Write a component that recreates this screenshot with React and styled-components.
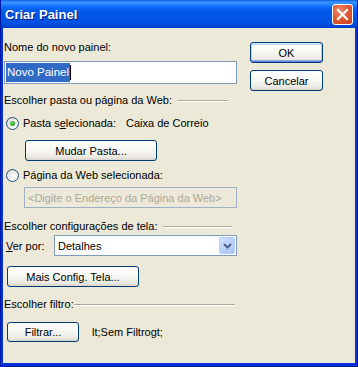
import React from 'react';
import styled, { createGlobalStyle, css } from 'styled-components';

const Global = createGlobalStyle`
  html, body { margin: 0; padding: 0; background: #0831D9; }
  body { font-family: Tahoma, "Liberation Sans", Arial, sans-serif; font-size: 11px; color: #000; }
`;

const CriarPainel = () => {
    return (
        <Window>
            <Global />
            <TitleBar>
                <Title>Criar Painel</Title>
                <CloseButton>
                    <svg width="13" height="13" viewBox="0 0 13 13">
                        <path d="M2 2 L11 11 M11 2 L2 11" stroke="#fff" strokeWidth="2.2" strokeLinecap="square" />
                    </svg>
                </CloseButton>
            </TitleBar>
            <Body>
                <LeftColumn>
                    <Label style={{ marginTop: 13 }}>Nome do novo painel:</Label>
                    <TextBox>
                        <Selected>Novo Painel</Selected>
                        <Caret />
                    </TextBox>

                    <Header top={10}>
                        <span>Escolher pasta ou página da Web:</span>
                        <Line gap={5} right={9} />
                    </Header>
                    <RadioRow top={10}>
                        <Radio checked />
                        <span>Pasta s<u>e</u>lecionada:</span>
                        <Value>Caixa de Correio</Value>
                    </RadioRow>
                    <Button top={10} left={21} width={132}>Mudar Pasta...</Button>
                    <RadioRow top={8}>
                        <Radio />
                        <span>Página da Web selecionada:</span>
                    </RadioRow>
                    <DisabledBox>&lt;Digite o Endereço da Página da Web&gt;</DisabledBox>

                    <Header top={12}>
                        <span>Escolher configurações de tela:</span>
                        <Line gap={6} right={5} />
                    </Header>
                    <SelectRow>
                        <span><u>V</u>er por:</span>
                        <Select>
                            <span>Detalhes</span>
                            <ArrowButton>
                                <svg width="9" height="6" viewBox="0 0 9 6">
                                    <path d="M1 1 L4.5 4.5 L8 1" fill="none" stroke="#4D6185" strokeWidth="2" />
                                </svg>
                            </ArrowButton>
                        </Select>
                    </SelectRow>
                    <Button top={10} left={3} width={132}>Mais Config. Tela...</Button>

                    <Header top={11}>
                        <span>Escolher filtro:</span>
                        <Line gap={0} right={2} />
                    </Header>
                    <FilterRow>
                        <Button left={3} width={72} height={20}>Filtrar...</Button>
                        <span>lt;Sem Filtrogt;</span>
                    </FilterRow>
                </LeftColumn>
                <RightColumn>
                    <Button default width={73}>OK</Button>
                    <Button top={7} width={73}>Cancelar</Button>
                </RightColumn>
            </Body>
        </Window>
    )
}

export default CriarPainel;

const Window = styled.div`
    width: 358px;
    height: 367px;
    box-sizing: border-box;
    display: flex;
    flex-direction: column;
    background: #0831D9;
    border: 1px solid #0019A5;
    border-top: none;
    overflow: hidden;
`

const TitleBar = styled.div`
    height: 28px;
    flex: none;
    display: flex;
    align-items: center;
    justify-content: space-between;
    padding: 0 4px 0 4px;
    margin: 0 -1px;
    background: linear-gradient(to bottom,
        #0A5AE8 0px, #3D95FF 2px, #2A87FF 4px, #0B6CF7 7px,
        #0058E6 12px, #0055E5 18px, #0052E2 23px, #0048D4 26px, #003DC8 28px);
`

const Title = styled.span`
    color: #fff;
    font-family: "Trebuchet MS", "Liberation Sans", Arial, sans-serif;
    font-weight: bold;
    font-size: 13px;
    padding-left: 1px;
    text-shadow: 1px 1px 0 #0A1E80;
`

const CloseButton = styled.div`
    width: 19px;
    height: 19px;
    margin-top: 1px;
    margin-right: 1px;
    display: flex;
    align-items: center;
    justify-content: center;
    border: 1px solid #fff;
    border-radius: 3px;
    background: radial-gradient(circle at 35% 30%, #EE8A6A 0%, #E35B35 45%, #C8401C 100%);
`

const Body = styled.div`
    flex: 1;
    display: flex;
    margin: 0 2px 3px 2px;
    background: #ECE9D8;
    padding-left: 1px;
`

const LeftColumn = styled.div`
    width: 233px;
    display: flex;
    flex-direction: column;
`

const RightColumn = styled.div`
    margin-left: 13px;
    padding-top: 14px;
    display: flex;
    flex-direction: column;
`

const Label = styled.div`
    line-height: 13px;
    height: 13px;
`

const TextBox = styled.div`
    margin-top: 7px;
    height: 23px;
    box-sizing: border-box;
    border: 1px solid #7F9DB9;
    background: #fff;
    display: flex;
    align-items: center;
    padding-left: 1px;
`

const Selected = styled.span`
    background: #316AC5;
    color: #fff;
    line-height: 19px;
    padding: 0 1px;
    font-size: 11.5px;
`

const Caret = styled.span`
    width: 1px;
    height: 15px;
    background: #000;
`

const Header = styled.div`
    margin-top: ${p => p.top}px;
    height: 13px;
    line-height: 13px;
    display: flex;
    align-items: center;
    white-space: nowrap;
`

const Line = styled.div`
    flex: 1;
    margin-left: ${p => p.gap}px;
    margin-right: ${p => p.right}px;
    height: 1px;
    background: #ACA899;
    border-bottom: 1px solid #fff;
    margin-top: 1px;
`

const RadioRow = styled.div`
    margin-top: ${p => p.top}px;
    height: 13px;
    line-height: 13px;
    display: flex;
    align-items: center;
    padding-left: 2px;
    gap: 4px;
`

const Radio = styled.span`
    width: 13px;
    height: 13px;
    box-sizing: border-box;
    border-radius: 50%;
    border: 1px solid #1C5180;
    background: radial-gradient(circle at 70% 70%, #FFFFFF 0%, #F2F2EE 40%, #D6D3C8 100%);
    position: relative;
    flex: none;
    ${p => p.checked && css`
        &::after {
            content: '';
            position: absolute;
            left: 3px;
            top: 3px;
            width: 5px;
            height: 5px;
            border-radius: 50%;
            background: radial-gradient(circle at 40% 40%, #7BE07A 0%, #2DB12D 50%, #19921A 100%);
        }
    `}
`

const Value = styled.span`
    margin-left: 6px;
`

const Button = styled.div`
    margin-top: ${p => p.top || 0}px;
    margin-left: ${p => p.left || 0}px;
    width: ${p => p.width}px;
    height: ${p => p.height || 21}px;
    box-sizing: border-box;
    flex: none;
    display: flex;
    align-items: center;
    justify-content: center;
    border: 1px solid #003C74;
    border-radius: 3px;
    background: linear-gradient(to bottom, #FFFFFF 0%, #F7F7F4 45%, #EDECE6 80%, #D9D5CB 100%);
    ${p => p.default && css`
        box-shadow: inset 0 1px 0 #CEE7FF, inset 0 -1px 0 #6982EE, inset 1px 0 0 #B7D0F6, inset -1px 0 0 #B7D0F6,
            inset 0 2px 0 #BCD4F6, inset 0 -2px 0 #89ADE4;
    `}
`

const DisabledBox = styled.div`
    margin-top: 5px;
    margin-left: 20px;
    height: 21px;
    box-sizing: border-box;
    border: 1px solid #9DB0C6;
    color: #ACA899;
    display: flex;
    align-items: center;
    padding-left: 3px;
`

const SelectRow = styled.div`
    margin-top: 2px;
    height: 21px;
    display: flex;
    align-items: center;
    padding-left: 2px;
`

const Select = styled.div`
    margin-left: auto;
    width: 183px;
    height: 21px;
    box-sizing: border-box;
    border: 1px solid #7F9DB9;
    background: #fff;
    display: flex;
    align-items: center;
    justify-content: space-between;
    padding: 0 1px 0 3px;
`

const ArrowButton = styled.div`
    width: 16px;
    height: 17px;
    box-sizing: border-box;
    border: 1px solid #B9CDF9;
    border-radius: 2px;
    background: linear-gradient(135deg, #D5E2FD 0%, #BBCFFB 50%, #ABC3F7 100%);
    display: flex;
    align-items: center;
    justify-content: center;
`

const FilterRow = styled.div`
    margin-top: 11px;
    display: flex;
    align-items: center;
    gap: 13px;
`
